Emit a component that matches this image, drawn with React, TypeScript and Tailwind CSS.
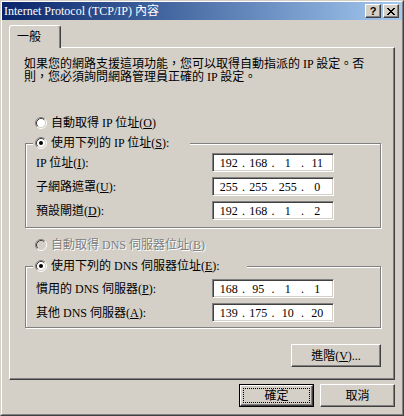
import { Fragment } from 'react'

const raised =
  'border border-t-white border-l-white border-r-[#404040] border-b-[#404040] shadow-[inset_-1px_-1px_0_#808080]'
const sunken =
  'border border-t-[#808080] border-l-[#808080] border-r-white border-b-white shadow-[inset_1px_1px_0_#404040,inset_-1px_-1px_0_#d4d0c8]'

function Mn({ children }: { children: React.ReactNode }) {
  return <span className="underline underline-offset-[1px]">{children}</span>
}

function Radio({ checked, disabled }: { checked?: boolean; disabled?: boolean }) {
  return (
    <svg width="12" height="12" viewBox="0 0 12 12" className="shrink-0">
      <circle cx="6" cy="6" r="4.5" fill={disabled ? '#d4d0c8' : '#fff'} />
      <path d="M2.11 9.89A5.5 5.5 0 0 1 9.89 2.11" stroke="#808080" fill="none" />
      <path d="M9.89 2.11A5.5 5.5 0 0 1 2.11 9.89" stroke="#fff" fill="none" />
      <path d="M2.82 9.18A4.5 4.5 0 0 1 9.18 2.82" stroke="#404040" fill="none" />
      <path d="M9.18 2.82A4.5 4.5 0 0 1 2.82 9.18" stroke="#d4d0c8" fill="none" />
      {checked && <circle cx="6" cy="6" r="2" fill="#000" />}
    </svg>
  )
}

function IpBox({ parts }: { parts: string[] }) {
  return (
    <div className={`flex h-[19px] w-[122px] items-center bg-white px-[4px] ${sunken}`}>
      {parts.map((p, i) => (
        <Fragment key={i}>
          {i > 0 && <span className="w-[6px] text-center">.</span>}
          <span className="flex-1 text-center">{p}</span>
        </Fragment>
      ))}
    </div>
  )
}

function Row({ label, parts }: { label: React.ReactNode; parts: string[] }) {
  return (
    <div className="flex h-[19px] items-center">
      <span className="w-[176px] whitespace-nowrap">{label}</span>
      <IpBox parts={parts} />
    </div>
  )
}

function Group({
  legend,
  width,
  children,
  className = '',
}: {
  legend: React.ReactNode
  width: string
  children: React.ReactNode
  className?: string
}) {
  return (
    <fieldset
      className={`ml-[15px] w-[356px] border border-[#808080] shadow-[inset_1px_1px_0_#fff,1px_1px_0_#fff] ${className}`}
    >
      <legend className={`ml-[7px] flex h-[16px] items-center gap-[4px] bg-[#d4d0c8] px-[2px] ${width}`}>
        <Radio checked />
        <span className="whitespace-nowrap">{legend}</span>
      </legend>
      {children}
    </fieldset>
  )
}

export default function App() {
  return (
    <div className="h-[416px] w-[404px] border border-t-[#d4d0c8] border-l-[#d4d0c8] border-r-[#404040] border-b-[#404040] bg-[#d4d0c8] font-['Liberation_Serif','Noto_Sans_CJK_TC',serif] text-[12px] leading-[12px] text-black">
      <div className="flex h-full flex-col border border-t-white border-l-white border-r-[#808080] border-b-[#808080]">
        <div className="flex h-[18px] items-center bg-gradient-to-r from-[#0a246a] to-[#a6caf0] pl-[2px] pr-[3px]">
          <span className="flex-1 whitespace-nowrap leading-[18px] text-white">
            Internet Protocol (TCP/IP) 內容
          </span>
          <div
            className={`flex h-[14px] w-[16px] items-center justify-center bg-[#d4d0c8] font-['Liberation_Sans',sans-serif] text-[11px] font-bold leading-none ${raised}`}
          >
            ?
          </div>
          <div className={`ml-[2px] flex h-[14px] w-[16px] items-center justify-center bg-[#d4d0c8] ${raised}`}>
            <svg width="8" height="7" viewBox="0 0 8 7" shapeRendering="crispEdges">
              <path
                d="M0 0h2v1h-2z M6 0h2v1h-2z M1 1h2v1h-2z M5 1h2v1h-2z M2 2h4v1h-4z M3 3h2v1h-2z M2 4h4v1h-4z M1 5h2v1h-2z M5 5h2v1h-2z M0 6h2v1h-2z M6 6h2v1h-2z"
                fill="#000"
              />
            </svg>
          </div>
        </div>

        <div className="ml-[7px] mt-[5px] w-[386px]">
          <div className="relative z-10 -mb-px h-[23px] w-[52px] rounded-t-[3px] border-l border-r border-t border-l-white border-r-[#404040] border-t-white bg-[#d4d0c8] pl-[7px] pt-[5px] shadow-[inset_-1px_0_0_#808080]">
            一般
          </div>

          <div className={`h-[333px] ${raised}`}>
            <p className="whitespace-nowrap pl-[14px] pt-[10px] leading-[13px]">
              如果您的網路支援這項功能，您可以取得自動指派的 IP 設定。否
              <br />
              則，您必須詢問網路管理員正確的 IP 設定。
            </p>

            <div className="mt-[31px] flex h-[16px] items-center gap-[4px] pl-[25px]">
              <Radio />
              <span>
                自動取得 IP 位址(<Mn>O</Mn>)
              </span>
            </div>

            <Group
              className="mt-[4px] pb-[7px]"
              width="w-[157px]"
              legend={
                <>
                  使用下列的 IP 位址(<Mn>S</Mn>):
                </>
              }
            >
              <div className="flex flex-col gap-[5px] pl-[10px] pt-[2px]">
                <Row
                  label={
                    <>
                      IP 位址(<Mn>I</Mn>):
                    </>
                  }
                  parts={['192', '168', '1', '11']}
                />
                <Row
                  label={
                    <>
                      子網路遮罩(<Mn>U</Mn>):
                    </>
                  }
                  parts={['255', '255', '255', '0']}
                />
                <Row
                  label={
                    <>
                      預設閘道(<Mn>D</Mn>):
                    </>
                  }
                  parts={['192', '168', '1', '2']}
                />
              </div>
            </Group>

            <div className="mt-[9px] flex h-[16px] items-center gap-[4px] pl-[25px] text-[#808080] [text-shadow:1px_1px_0_#fff]">
              <Radio disabled />
              <span>
                自動取得 DNS 伺服器位址(<Mn>B</Mn>)
              </span>
            </div>

            <Group
              className="mt-[5px] pb-[5px]"
              width="w-[214px]"
              legend={
                <>
                  使用下列的 DNS 伺服器位址(<Mn>E</Mn>):
                </>
              }
            >
              <div className="flex flex-col gap-[5px] pl-[10px] pt-[5px]">
                <Row
                  label={
                    <>
                      慣用的 DNS 伺服器(<Mn>P</Mn>):
                    </>
                  }
                  parts={['168', '95', '1', '1']}
                />
                <Row
                  label={
                    <>
                      其他 DNS 伺服器(<Mn>A</Mn>):
                    </>
                  }
                  parts={['139', '175', '10', '20']}
                />
              </div>
            </Group>

            <div className="ml-[15px] mt-[16px] flex w-[356px] justify-end">
              <div className={`flex h-[23px] w-[90px] items-center justify-center ${raised}`}>
                進階(<Mn>V</Mn>)...
              </div>
            </div>
          </div>

          <div className="mt-[4px] flex justify-end gap-[6px]">
            <div className="flex h-[23px] w-[75px] border border-black">
              <div className={`flex flex-1 p-[2px] ${raised}`}>
                <div className="flex flex-1 items-center justify-center border border-dotted border-black">
                  確定
                </div>
              </div>
            </div>
            <div className={`flex h-[23px] w-[75px] items-center justify-center ${raised}`}>取消</div>
          </div>
        </div>
      </div>
    </div>
  )
}
